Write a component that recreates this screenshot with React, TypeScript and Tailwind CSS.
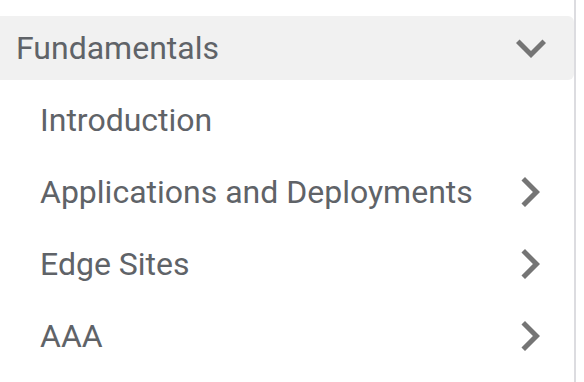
import React from "react";

const ChevronDown = () => (
  <svg width="60" height="60" viewBox="0 0 24 24" fill="#757575">
    <path d="M16.59 8.59L12 13.17 7.41 8.59 6 10l6 6 6-6z" />
  </svg>
);

const ChevronRight = () => (
  <svg width="60" height="60" viewBox="0 0 24 24" fill="#757575">
    <path d="M10 6L8.59 7.41 13.17 12l-4.58 4.59L10 18l6-6z" />
  </svg>
);

const items: { label: string; arrow: boolean }[] = [
  { label: "Introduction", arrow: false },
  { label: "Applications and Deployments", arrow: true },
  { label: "Edge Sites", arrow: true },
  { label: "AAA", arrow: true },
];

export default function App() {
  return (
    <div
      className="flex w-[584px] h-[382px] bg-white overflow-hidden"
      style={{ fontFamily: "Roboto, 'Liberation Sans', sans-serif" }}
    >
      <div className="w-[576px] h-full border-r-2 border-[#dcdce0] pt-[16px] flex flex-col">
        <div className="h-[64px] bg-[#f1f1f1] rounded-r-[6px] flex items-center justify-between pl-[16px] pr-[13px]">
          <span className="text-[32px] leading-none text-[#5f6368]">Fundamentals</span>
          <ChevronDown />
        </div>
        <div className="mt-[4px] flex flex-col">
          {items.map((it) => (
            <div
              key={it.label}
              className="h-[72px] flex items-center justify-between pl-[40px] pr-[14px]"
            >
              <span className="text-[32px] leading-none text-[#5f6368]">{it.label}</span>
              {it.arrow ? <ChevronRight /> : null}
            </div>
          ))}
        </div>
      </div>
    </div>
  );
}
